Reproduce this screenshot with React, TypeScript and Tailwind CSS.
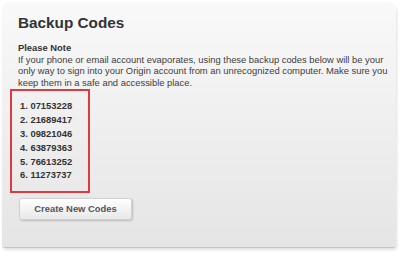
import React from "react";

const codes = ["07153228", "21689417", "09821046", "63879363", "76613252", "11273737"];

export default function App() {
  return (
    <div className="w-[400px] h-[258px] bg-white pt-[2px] pl-[2px] font-['Liberation_Sans',Arial,sans-serif]">
      <div className="w-[394px] h-[246px] rounded-t-[8px] rounded-b-[3px] bg-gradient-to-b from-[#f9f9f9] to-[#e5e5e5] border-b border-[#c4c4c4] shadow-[1px_2px_3px_rgba(0,0,0,0.12)] pl-[16px] pt-[12px]">
        <h1 className="text-[15.3px] leading-[18px] font-bold text-[#333333]">Backup Codes</h1>
        <div className="mt-[10px] text-[9.4px] leading-[11.6px] text-[#3d3d3d] w-[378px]">
          <div className="font-bold text-[#333333]">Please Note</div>
          <p>
            If your phone or email account evaporates, using these backup codes below will be your only way to sign into your Origin account from an unrecognized computer. Make sure you keep them in a safe and accessible place.
          </p>
        </div>
        <div className="ml-[-8px] mt-[1px] w-[80px] border-2 border-[#e03a3e] pl-[8px] pt-[8px] pb-[9px]">
          {codes.map((c, i) => (
            <div key={c} className="text-[9.4px] leading-[13.8px] font-bold text-[#333333]">
              {i + 1}. {c}
            </div>
          ))}
        </div>
        <button className="mt-[5px] ml-[1px] h-[22px] w-[113px] rounded-[3px] border border-[#d2d2d2] bg-gradient-to-b from-white to-[#e8e8e8] shadow-[1px_1px_2px_rgba(0,0,0,0.2)] text-[9.4px] font-bold text-[#555555]">
          Create New Codes
        </button>
      </div>
    </div>
  );
}
